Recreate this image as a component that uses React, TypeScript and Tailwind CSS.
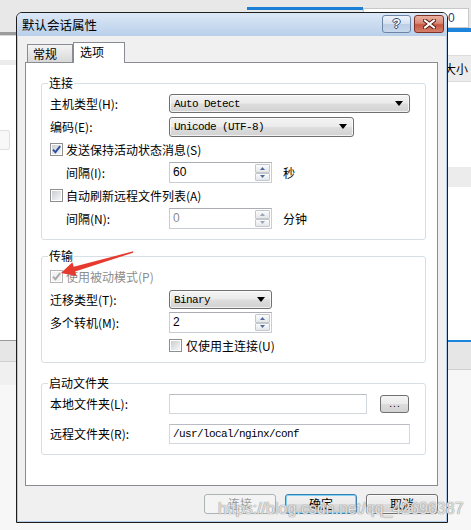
import React from "react";

function Check({ checked = false, disabled = false }: { checked?: boolean; disabled?: boolean }) {
  return (
    <span
      className={
        disabled
          ? "w-[13px] h-[13px] shrink-0 border border-[#b5b5b5] bg-white p-[1px] flex"
          : "w-[13px] h-[13px] shrink-0 border border-[#8e8f8f] bg-white p-[1px] flex"
      }
    >
      <span
        className={
          disabled
            ? "flex-1 bg-[#f2f2f2] flex items-center justify-center"
            : "flex-1 bg-gradient-to-br from-[#c9cdd3] to-[#f7f7f7] flex items-center justify-center"
        }
      >
        {checked && (
          <svg width="9" height="9" viewBox="0 0 9 9">
            <path
              d="M1 4.6 L3.4 7.2 L8.2 1.2"
              fill="none"
              stroke={disabled ? "#a9a9a9" : "#2f4f9f"}
              strokeWidth="1.9"
            />
          </svg>
        )}
      </span>
    </span>
  );
}

function Combo({ className, text }: { className: string; text: string }) {
  return (
    <div
      className={
        "flex items-center justify-between rounded-[3px] border border-[#707070] bg-[linear-gradient(#f4f4f4_0%,#ebebeb_48%,#dddddd_52%,#d2d2d2_100%)] shadow-[inset_0_0_0_1px_rgba(255,255,255,0.7)] pl-[4px] pr-[6px] " +
        className
      }
    >
      <span className="font-['Liberation_Mono',monospace] text-[11px] tracking-[-0.6px] leading-[14px] text-black whitespace-pre">
        {text}
      </span>
      <svg width="8" height="5" viewBox="0 0 8 5">
        <path d="M0 0 H8 L4 5 Z" fill="#000" />
      </svg>
    </div>
  );
}

function SpinHalf({ up, disabled }: { up: boolean; disabled?: boolean }) {
  return (
    <div className="flex-1 flex items-center justify-center border border-[#c3c8ce] rounded-[1px] bg-gradient-to-b from-[#fbfbfb] to-[#e4e6e9]">
      <svg width="5" height="3" viewBox="0 0 5 3">
        <path d={up ? "M0 3 L2.5 0 L5 3 Z" : "M0 0 L5 0 L2.5 3 Z"} fill={disabled ? "#9aa6b8" : "#4f6a9c"} />
      </svg>
    </div>
  );
}

function Spin({ value, disabled = false }: { value: string; disabled?: boolean }) {
  return (
    <div className="w-[103px] h-[21px] flex border border-[#c8cdd3] border-t-[#abadb3] bg-white">
      <span
        className={
          disabled
            ? "flex-1 pl-[3px] leading-[19px] font-['Liberation_Sans',sans-serif] text-[12px] text-[#8c8c8c]"
            : "flex-1 pl-[3px] leading-[19px] font-['Liberation_Sans',sans-serif] text-[12px] text-black"
        }
      >
        {value}
      </span>
      <div className="w-[16px] flex flex-col py-[1px] pr-[1px]">
        <SpinHalf up disabled={disabled} />
        <SpinHalf up={false} disabled={disabled} />
      </div>
    </div>
  );
}

function Row({ children, className = "" }: { children: React.ReactNode; className?: string }) {
  return <div className={"h-[23px] flex items-center " + className}>{children}</div>;
}

function Label({ children }: { children: React.ReactNode }) {
  return <span className="w-[119px] shrink-0 whitespace-nowrap">{children}</span>;
}

function Indented({ children }: { children: React.ReactNode }) {
  return <span className="w-[119px] shrink-0 pl-[16px] whitespace-nowrap">{children}</span>;
}

function Group({ title, children, className = "" }: { title: string; children: React.ReactNode; className?: string }) {
  return (
    <fieldset className={"border border-[#d5dfe5] rounded-[3px] " + className}>
      <legend className="ml-[6px] px-[1px] text-[12px] leading-[14px]">{title}</legend>
      {children}
    </fieldset>
  );
}

function Background() {
  return (
    <div className="flex w-[471px] h-[530px]">
      <div className="w-[247px] flex flex-col">
        <div className="h-[32px] bg-[#e8e8e8]" />
        <div className="h-[3px] bg-[#9c9c9c]" />
        <div className="h-[25px] bg-white border-t border-[#d8d8d8]" />
        <div className="h-[5px] bg-[#ececec]" />
        <div className="h-[275px] bg-white pt-[65px]">
          <div className="w-[10px] h-[20px] rounded-r-[3px] border border-l-0 border-[#e0e0e0] bg-[#f8f8f8]" />
        </div>
        <div className="h-[22px] bg-[#e6e6e6] border-t border-[#9a9a9a] border-b border-b-[#d0d0d0]" />
        <div className="h-[23px] bg-[#f0f0f0]" />
        <div className="flex-1 bg-[#f7f7f7]" />
      </div>
      <div className="flex-1 flex flex-col">
        <div className="h-[28px] bg-[#e8e8e8] flex items-start">
          <div className="w-[116px] h-[3px] mt-[7px] bg-[#1b7fd6]" />
          <div className="w-[106px] h-[20px] mt-[8px] bg-white border border-[#c8c8c8] pl-[84px] leading-[18px] font-['Liberation_Sans',sans-serif] text-[12px] text-[#1d3f7a]">
            0
          </div>
        </div>
        <div className="h-[4px] bg-[#1c84dc]" />
        <div className="h-[23px] bg-white" />
        <div className="h-[27px] bg-[#ececec] border-y border-[#dcdcdc] flex items-center pl-[197px] text-[12px] whitespace-nowrap">
          大小
        </div>
        <div className="h-[85px] bg-white" />
        <div className="h-[20px] bg-[#ececec]" />
        <div className="h-[153px] bg-white" />
        <div className="h-[2px] bg-[#1c84dc]" />
        <div className="h-[28px] bg-[#e6e6e6] border-b border-[#d0d0d0]" />
        <div className="flex-1 bg-[#f7f7f7]" />
      </div>
    </div>
  );
}

export default function App() {
  return (
    <div className="relative w-[471px] h-[530px] overflow-hidden font-['Noto_Sans_CJK_SC','Noto_Sans',sans-serif] text-[12px] text-black">
      <Background />

      {/* Dialog window */}
      <div className="absolute left-[16px] top-[12px] w-[432px] h-[511px] flex flex-col border border-[#1e1e1e] rounded-t-[6px] bg-[#f0f0f0] overflow-hidden">
        {/* Title bar */}
        <div className="h-[23px] shrink-0 flex items-center justify-between pl-[5px] pr-[3px] bg-gradient-to-b from-[#dce8f6] to-[#b9cfea]">
          <span className="text-[12.5px] leading-[14px] text-black">默认会话属性</span>
          <div className="flex gap-[3px] self-start mt-[2px]">
            <div className="w-[29px] h-[18px] rounded-[3px] border border-[#6c84a6] bg-[linear-gradient(#eef3fa_0%,#d6e2f0_48%,#bccee5_52%,#c8d8ec_100%)] flex items-center justify-center">
              <span className="font-['Liberation_Sans',sans-serif] font-bold text-[13px] leading-[14px] text-white [text-shadow:1px_0_0_#34476a,-1px_0_0_#34476a,0_1px_0_#34476a,0_-1px_0_#34476a]">
                ?
              </span>
            </div>
            <div className="w-[30px] h-[18px] rounded-[3px] border border-[#7e3226] bg-[linear-gradient(#eab0a2_0%,#d98a77_45%,#c5563f_55%,#d6806c_100%)] flex items-center justify-center">
              <svg width="13" height="10" viewBox="0 0 13 10">
                <path d="M2 1.5 L11 8.5 M11 1.5 L2 8.5" stroke="#5a1a12" strokeWidth="4" strokeLinecap="square" />
                <path d="M2 1.5 L11 8.5 M11 1.5 L2 8.5" stroke="#ffffff" strokeWidth="2" strokeLinecap="square" />
              </svg>
            </div>
          </div>
        </div>

        {/* Body */}
        <div className="flex-1 flex flex-col pl-[7px] pr-[8px] pt-[6px] border-x border-b border-[#b3cbe7]">
          {/* Tabs */}
          <div className="h-[20px] flex items-end pl-[2px] relative z-10">
            <div className="w-[46px] h-[18px] border border-b-0 border-[#898c95] bg-gradient-to-b from-[#f4f4f4] to-[#d8d8d8] pl-[5px] leading-[17px]">
              常规
            </div>
            <div className="w-[52px] h-[21px] -mb-[1px] border border-b-0 border-[#898c95] bg-white pl-[6px] leading-[18px]">
              选项
            </div>
          </div>

          {/* Tab panel */}
          <div className="h-[424px] shrink-0 border border-[#898c95] bg-white pt-[13px] pl-[15px] pr-[11px] flex flex-col">
            <Group title="连接" className="pb-[9px]">
              <div className="pl-[8px] pt-[2px] flex flex-col">
                <Row>
                  <Label>主机类型(H):</Label>
                  <Combo className="w-[241px] h-[19px]" text="Auto Detect" />
                </Row>
                <Row>
                  <Label>编码(E):</Label>
                  <Combo className="w-[185px] h-[20px]" text="Unicode (UTF-8)" />
                </Row>
                <Row className="gap-[3px]">
                  <Check checked />
                  <span>发送保持活动状态消息(S)</span>
                </Row>
                <Row>
                  <Indented>间隔(I):</Indented>
                  <Spin value="60" />
                  <span className="ml-[11px]">秒</span>
                </Row>
                <Row className="gap-[3px]">
                  <Check />
                  <span>自动刷新远程文件列表(A)</span>
                </Row>
                <Row>
                  <Indented>间隔(N):</Indented>
                  <Spin value="0" disabled />
                  <span className="ml-[11px]">分钟</span>
                </Row>
              </div>
            </Group>

            <Group title="传输" className="mt-[9px] pb-[5px]">
              <div className="pl-[8px] pt-[2px] flex flex-col">
                <Row className="gap-[3px]">
                  <Check checked disabled />
                  <span className="text-[#8d8d8d]">使用被动模式(P)</span>
                </Row>
                <Row>
                  <Label>迁移类型(T):</Label>
                  <Combo className="w-[103px] h-[19px]" text="Binary" />
                </Row>
                <Row>
                  <Label>多个转机(M):</Label>
                  <Spin value="2" />
                </Row>
                <Row>
                  <span className="w-[119px] shrink-0" />
                  <Check />
                  <span className="ml-[4px]">仅使用主连接(U)</span>
                </Row>
              </div>
            </Group>

            <Group title="启动文件夹" className="mt-[13px] pb-[10px]">
              <div className="pl-[8px] pt-[4px] flex flex-col gap-[10px]">
                <div className="h-[20px] flex items-center">
                  <Label>本地文件夹(L):</Label>
                  <div className="w-[198px] h-[20px] border border-[#d3d8de] border-t-[#b9bcc2] bg-white" />
                  <div className="ml-[13px] w-[29px] h-[18px] rounded-[3px] border border-[#707070] bg-[linear-gradient(#f4f4f4_0%,#ebebeb_48%,#dddddd_52%,#d2d2d2_100%)] flex items-center justify-center">
                    <span className="font-['Liberation_Sans',sans-serif] text-[10px] leading-[10px] tracking-[1px] pl-[1px]">...</span>
                  </div>
                </div>
                <div className="h-[20px] flex items-center">
                  <Label>远程文件夹(R):</Label>
                  <div className="w-[241px] h-[20px] border border-[#d3d8de] border-t-[#b9bcc2] bg-white flex items-center pl-[3px]">
                    <span className="font-['Liberation_Mono',monospace] text-[11px] tracking-[-0.6px] leading-[14px]">
                      /usr/local/nginx/conf
                    </span>
                  </div>
                </div>
              </div>
            </Group>
          </div>

          {/* Buttons */}
          <div className="mt-[8px] flex justify-end gap-[9px]">
            <div className="w-[72px] h-[20px] rounded-[3px] border border-[#adb2b5] bg-[#f4f4f4] flex items-center justify-center text-[#9a9a9a]">
              连接
            </div>
            <div className="w-[72px] h-[20px] rounded-[3px] border border-[#3c7fb1] bg-[linear-gradient(#f2f2f2_0%,#ebebeb_48%,#dddddd_52%,#cfcfcf_100%)] shadow-[inset_0_0_0_1px_#7fd3f7] flex items-center justify-center">
              确定
            </div>
            <div className="w-[72px] h-[20px] rounded-[3px] border border-[#707070] bg-[linear-gradient(#f2f2f2_0%,#ebebeb_48%,#dddddd_52%,#cfcfcf_100%)] shadow-[inset_0_0_0_1px_rgba(255,255,255,0.7)] flex items-center justify-center">
              取消
            </div>
          </div>
        </div>
      </div>

      {/* Red annotation arrow */}
      <svg className="absolute left-[55px] top-[245px]" width="85" height="35" viewBox="0 0 85 35">
        <polygon
          points="78.3,6.3 18.7,21.7 17.4,17.2 6,28 21.6,31 20.1,26.5 78.1,7.7"
          fill="#e53a2d"
        />
      </svg>

      {/* Watermark */}
      <div className="absolute left-[218px] top-[500px] font-['Liberation_Sans',sans-serif] text-[16px] leading-[18px] text-white/75 whitespace-nowrap [text-shadow:0_0_1px_#8a8a8a,0_0_1px_#8a8a8a]">
        https://blog.csdn.net/qq_42696387
      </div>
    </div>
  );
}
